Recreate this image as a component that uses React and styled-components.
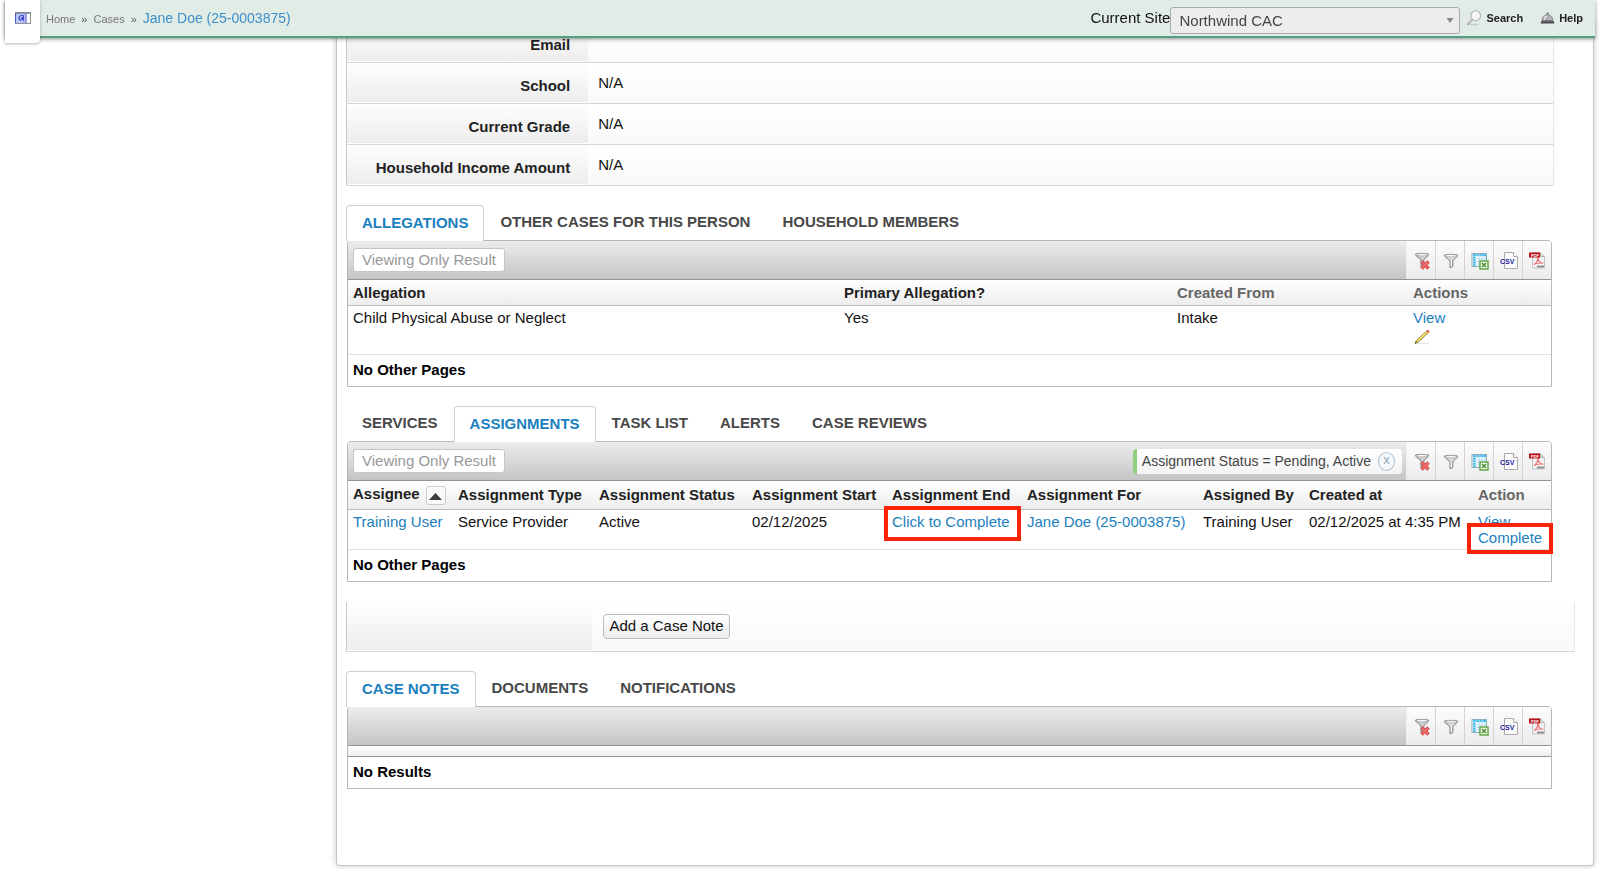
import React from "react";
import styled, { createGlobalStyle } from "styled-components";

const GlobalStyle = createGlobalStyle`
  * {
    box-sizing: border-box;
  }
  body {
    margin: 0;
    background: #fff;
    color: #111;
    font-family: "Liberation Sans", Arial, Helvetica, sans-serif;
    font-size: 15px;
    line-height: 16px;
  }
  button, select {
    font-family: inherit;
    font-size: inherit;
    line-height: inherit;
  }
`;

const Link = styled.a`
  color: #1c7fbd;
  text-decoration: none;
`;

/* ---------- top bar ---------- */

const TopBar = styled.header`
  position: fixed;
  top: 0;
  left: 5px;
  right: 5px;
  z-index: 2;
  display: flex;
  align-items: center;
  height: 38px;
  padding-right: 12px;
  background: #e2ece6;
  border-bottom: 2px solid #53a080;
  box-shadow: 0 1px 4px rgba(0, 0, 0, 0.45);
`;

const MenuToggle = styled.button`
  align-self: flex-start;
  flex: none;
  width: 35px;
  height: 43px;
  padding: 0 0 8px;
  border: none;
  border-radius: 0 0 4px 0;
  background: #fff;
  box-shadow: 0 1px 3px rgba(0, 0, 0, 0.3);
  cursor: pointer;

  svg {
    display: block;
    margin: 0 auto;
  }
`;

const Crumbs = styled.nav`
  display: flex;
  align-items: baseline;
  gap: 6px;
  flex: 1;
  padding-left: 6px;
  font-size: 11px;
  color: #555;
`;

const Crumb = styled(Link)`
  color: ${(props) => (props.$current ? "#3d8fc9" : "#777")};
  font-size: ${(props) => (props.$current ? "14px" : "11px")};
`;

const SiteLabel = styled.label`
  color: #111;
`;

const SelectBox = styled.div`
  position: relative;
  width: 290px;
  margin-top: 5px;

  svg {
    position: absolute;
    right: 6px;
    top: 11px;
    pointer-events: none;
  }
`;

const SiteSelect = styled.select`
  display: block;
  appearance: none;
  width: 100%;
  height: 27px;
  padding: 0 24px 0 8px;
  border: 1px solid #aaa;
  border-radius: 3px;
  background: #ededed;
  color: #444;
`;

const BarLink = styled.a`
  display: flex;
  align-items: center;
  gap: 4px;
  margin-left: ${(props) => props.$gap};
  color: #222;
  font-size: 11px;
  font-weight: bold;
  text-decoration: none;
`;

/* ---------- page panel ---------- */

const Panel = styled.main`
  margin: 22px 6px 3px 336px;
  padding: 0 0 76px 9px;
  border: 1px solid #c4c4c4;
  border-top: none;
  border-radius: 0 0 4px 4px;
  background: #fff;
  box-shadow: 0 0 6px rgba(0, 0, 0, 0.22);
`;

const Details = styled.dl`
  margin: 0 39px 19px 0;
`;

const FormRow = styled.div`
  display: flex;
  height: ${(props) => (props.$tall ? "50px" : "41px")};
  border-left: 1px solid #c8c8c8;
  border-right: 1px solid #e8e8e8;
  border-bottom: 1px solid #d6d6d6;
  background: linear-gradient(#fff, #f9f9f9);
`;

const FormLabel = styled.dt`
  width: 20%;
  padding: 14px 18px 0 0;
  border-top: 1px solid #fff;
  border-bottom: 1px solid #fff;
  background: linear-gradient(#fdfdfd, #ededed);
  color: #222;
  font-weight: bold;
  text-align: right;
`;

const FormValue = styled.dd`
  flex: 1;
  margin: 0;
  padding: 12px 0 0 10px;
`;

const NoteRow = styled(FormRow)`
  margin: 20px 18px 19px 0;
`;

const NoteLabel = styled.div`
  width: 20%;
  border-bottom: 1px solid #fff;
  background: linear-gradient(#fff, #ededed);
`;

const NoteButton = styled.button`
  align-self: flex-start;
  height: 25px;
  margin: 12px 0 0 11px;
  padding: 0 5px 1px;
  border: 1px solid #bbb;
  border-radius: 4px;
  background: linear-gradient(#fff, #ececec);
  color: #111;
  cursor: pointer;
`;

/* ---------- tabs ---------- */

const Tabs = styled.div`
  display: flex;
  height: 35px;
`;

const Tab = styled.button`
  height: ${(props) => (props.$active ? "36px" : "34px")};
  padding: 0 15px 2px;
  border: 1px solid ${(props) => (props.$active ? "#d0d0d0" : "transparent")};
  border-bottom: none;
  border-radius: 4px 4px 0 0;
  background: ${(props) => (props.$active ? "#fff" : "transparent")};
  color: ${(props) => (props.$active ? "#1a80c0" : "#484848")};
  font-weight: bold;
  text-transform: uppercase;
  white-space: nowrap;
  cursor: pointer;
  z-index: 1;
`;

/* ---------- data grid ---------- */

const Grid = styled.section`
  margin: 0 41px ${(props) => (props.$gap ? "19px" : "0")} 1px;
  border: 1px solid #b8b8b8;
  border-radius: 4px 4px 0 0;
  background: #fff;
`;

const Toolbar = styled.div`
  display: flex;
  align-items: center;
  height: 39px;
  padding-left: 5px;
  border-bottom: 1px solid #959595;
  border-radius: 3px 3px 0 0;
  background: linear-gradient(#ececec, #c5c5c5);
`;

const ResultButton = styled.button`
  height: 24px;
  padding: 0 8px 1px;
  border: 1px solid #c6c6c6;
  border-radius: 3px;
  background: #fff;
  color: #999;
`;

const FilterChip = styled.div`
  display: flex;
  align-items: center;
  gap: 7px;
  height: 25px;
  padding: 0 7px 0 5px;
  border-left: 4px solid #8fd07f;
  border-radius: 4px;
  background: linear-gradient(#fff, #f3f3f3);
  color: #444;
  font-size: 14px;
`;

const ChipClose = styled.button`
  width: 17px;
  height: 19px;
  padding: 0 0 2px;
  border: 1px solid #a9bfd2;
  border-radius: 50%;
  background: #f6f9fc;
  color: #8fa9c0;
  font-size: 13px;
  line-height: 14px;
  cursor: pointer;
`;

const Tools = styled.div`
  display: flex;
  align-self: stretch;
  margin-left: ${(props) => (props.$chip ? "4px" : "auto")};
`;

const Spacer = styled.div`
  flex: 1;
`;

const Tool = styled.button`
  width: 29px;
  padding: 1px 0 0 1px;
  border: none;
  border-left: 1px solid #d4d4d4;
  background: linear-gradient(#fcfcfc, #ececec);
  cursor: pointer;

  &:first-child {
    border-left-color: #eee;
  }
  &:last-child {
    border-top-right-radius: 3px;
  }
  svg {
    display: block;
    margin: 0 auto;
  }
`;

const Table = styled.table`
  width: 100%;
  border-collapse: separate;
  border-spacing: 0;
  table-layout: fixed;
`;

const Col = styled.col`
  width: ${(props) => props.$w}px;
`;

const Th = styled.th`
  height: ${(props) => (props.$tall ? "29px" : "26px")};
  padding: 0 0 0 5px;
  border-bottom: 1px solid #bdbdbd;
  background: linear-gradient(#fff, #ededed);
  color: ${(props) => (props.$plain ? "#666" : "#222")};
  text-align: left;
  white-space: nowrap;
`;

const Td = styled.td`
  height: ${(props) => (props.$tall ? "49px" : "40px")};
  padding: 4px 0 3px 5px;
  border-bottom: 1px solid #e2e2e2;
  vertical-align: top;
  white-space: nowrap;
`;

const SortHead = styled.div`
  display: flex;
  align-items: flex-start;
  gap: 6px;
`;

const SortButton = styled.button`
  width: 20px;
  height: 19px;
  padding: 0;
  border: 1px solid #ccc;
  border-radius: 3px;
  background: #fafafa;
  cursor: pointer;

  svg {
    display: block;
    margin: 2px auto 0;
  }
`;

const EmptyHead = styled.div`
  height: 11px;
  border-bottom: 1px solid #959595;
  background: linear-gradient(#fff, #ededed);
`;

const Pager = styled.div`
  height: 31px;
  padding: 7px 5px 0;
  color: #000;
  font-weight: bold;
`;

const ActionLink = styled(Link)`
  display: block;
  width: max-content;

  svg {
    display: block;
    margin: 3px 0 0 1px;
  }
`;

const Marked = styled(Link)`
  position: relative;
  display: block;
  width: max-content;

  &::after {
    content: "";
    position: absolute;
    top: ${(props) => (props.$tight ? "-7px" : "-8px")};
    bottom: ${(props) => (props.$tight ? "-8px" : "-11px")};
    left: ${(props) => (props.$tight ? "-11px" : "-8px")};
    right: ${(props) => (props.$tight ? "-11px" : "-11px")};
    border: 4px solid #fd2308;
  }
`;

/* ---------- icons ---------- */

const PanelIcon = () => (
  <svg width="16" height="12" viewBox="0 0 16 12">
    <rect x="0.5" y="0.5" width="15" height="11" fill="#fff" stroke="#8f9199" />
    <rect x="1" y="1" width="10" height="10" fill="#b9c6f5" />
    <path d="M0.5 1v10M11 1v10" stroke="#4a55cf" />
    <path d="M0 1.2h16" stroke="#777b8c" />
    <path d="M8.5 3.5H6.2Q4 4 4 6t2.4 2.4" fill="none" stroke="#3c48c8" strokeWidth="1.2" />
    <path d="M9 3.2v6L5.6 6.4z" fill="#3c48c8" />
  </svg>
);

const MagnifierIcon = () => (
  <svg width="15" height="16" viewBox="0 0 15 16">
    <ellipse cx="7" cy="14.6" rx="5" ry="0.8" fill="#c8d0cc" />
    <path d="M5.2 9.4L1 14" stroke="#a5a5a5" strokeWidth="2.4" strokeLinecap="round" />
    <path d="M5 9.4L1.2 13.6" stroke="#eee" />
    <circle cx="8.7" cy="5.7" r="4.9" fill="#f3f5f4" stroke="#b5b9b7" strokeWidth="1.3" />
    <path d="M6 5a3 3 0 0 1 3-2.4" fill="none" stroke="#fff" strokeWidth="1.2" />
  </svg>
);

const BellIcon = () => (
  <svg width="15" height="12" viewBox="0 0 15 12">
    <circle cx="7.5" cy="1.6" r="1.2" fill="#77757a" />
    <path d="M2 8.5C2.4 4.6 4.5 2.8 7.5 2.8s5.1 1.8 5.5 5.7z" fill="#b3b1b8" stroke="#77757c" strokeWidth="0.7" />
    <path d="M4.3 7.5c.3-2 1.2-3 2.4-3.5" fill="none" stroke="#f2f2f4" strokeWidth="1.3" />
    <path d="M0.5 11.5l1.3-3h11.4l1.3 3z" fill="#48464d" />
    <path d="M2 9h11" stroke="#8e8c94" strokeWidth="0.8" />
  </svg>
);

const CaretIcon = () => (
  <svg width="8" height="5" viewBox="0 0 8 5">
    <path d="M0.5 0h7L4 5z" fill="#888" />
  </svg>
);

const SortIcon = () => (
  <svg width="13" height="7" viewBox="0 0 13 7">
    <path d="M0 7L6.5 0 13 7z" fill="#3c3c3c" />
  </svg>
);

const funnel =
  "M1.2 2.5C1.2 1 14.8 1 14.8 2.5c0 1-5 4.5-5 5.5v5.5l-2.8 1.3V8c0-1-5.8-4.5-5.8-5.5z";

const FilterIcon = () => (
  <svg width="16" height="16" viewBox="0 0 16 16">
    <path d={funnel} fill="#d9d9d9" stroke="#7d7d7d" />
    <ellipse cx="8" cy="2.7" rx="5.6" ry="1.2" fill="#fafafa" stroke="#999" strokeWidth="0.6" />
    <path d="M8.3 7.5v6" stroke="#fff" />
  </svg>
);

const ClearFilterIcon = () => (
  <svg width="16" height="18" viewBox="0 0 16 18">
    <path d={funnel} fill="#cfcfcf" stroke="#7d7d7d" />
    <ellipse cx="8" cy="2.7" rx="5.6" ry="1.2" fill="#fafafa" stroke="#999" strokeWidth="0.6" />
    <path d="M7.5 9.5l7 7M14.5 9.5l-7 7" stroke="#c94444" strokeWidth="3.4" />
    <path d="M7.8 9.8l6.4 6.4M14.2 9.8l-6.4 6.4" stroke="#f06a6a" strokeWidth="2" />
  </svg>
);

const ExcelIcon = () => (
  <svg width="18" height="18" viewBox="0 0 18 18">
    <rect x="1" y="1.5" width="14.5" height="13" fill="#fff" stroke="#8faebc" />
    <path d="M2 2h13v2.4H2zM2 2h3v12H2z" fill="#4cbdec" />
    <path d="M5 7h10M5 9.5h10M5 12h10M8 4v10M11 4v10M14 4v10" stroke="#a8d8ee" strokeWidth="0.9" />
    <path d="M2 4.5h13M2 7h3M2 9.5h3M2 12h3M5 2v12M8 2v2M11 2v2" stroke="#fff" strokeWidth="0.5" />
    <rect x="9" y="9" width="8" height="8" fill="#f4fbef" stroke="#549b37" strokeWidth="1.3" />
    <path d="M11 11l4 4M15 11l-4 4" stroke="#4a9130" strokeWidth="1.5" />
  </svg>
);

const CsvIcon = () => (
  <svg width="18" height="18" viewBox="0 0 18 18">
    <path d="M4.5 0.5h9l4 4v12h-13z" fill="#fafafa" stroke="#aaa" />
    <path d="M13.5 0.5v4h4" fill="#fff" stroke="#aaa" />
    <text x="0" y="12" fontSize="7" fontWeight="bold" fill="#1c1ca8">
      CSV
    </text>
  </svg>
);

const PdfIcon = () => (
  <svg width="17" height="17" viewBox="0 0 17 17">
    <path d="M3.5 0.5h8l4 4v11.500h-12z" fill="#f2f2f2" stroke="#c4c4c4" />
    <path d="M11.5 0.5v4h4" fill="#ddd" stroke="#b3b3b3" />
    <path
      d="M5 12.5c2.500-1.500 4-4.500 3.800-7.500.2 3.500 2 6 5.500 6.200-3.500-.6-6.300-.2-9.300 1.300z"
      fill="none"
      stroke="#f07070"
      strokeWidth="1.1"
    />
    <path d="M8 14.5h7" stroke="#888" strokeWidth="1.8" />
    <rect x="0" y="0.5" width="11" height="5" fill="#bb1019" />
    <text x="2" y="4.5" fontSize="4" fontWeight="bold" fill="#fff">
      PDF
    </text>
  </svg>
);

const PencilIcon = () => (
  <svg width="17" height="16" viewBox="0 0 17 16">
    <path d="M3 14.6h12" stroke="#e2e2e2" strokeWidth="1.2" />
    <path d="M1 14.5l1.2-2.900L12.800 1.900l1.700 1.700L4 13.300z" fill="#ead244" stroke="#8c7a35" strokeWidth="0.8" />
    <path d="M12.200 2.300l1.400-1.500q1.500 0 2.100 1.800l-1.400 1.500z" fill="#e06a6a" />
    <path d="M1 14.5l.8-1.900 1.200 1.100z" fill="#333" />
    <path d="M3.8 11.5l8.500-7.800" stroke="#fff3a0" strokeWidth="0.8" />
  </svg>
);

/* ---------- page parts ---------- */

const tools = [
  { label: "Clear filters", Icon: ClearFilterIcon },
  { label: "Filter", Icon: FilterIcon },
  { label: "Export to Excel", Icon: ExcelIcon },
  { label: "Export to CSV", Icon: CsvIcon },
  { label: "Export to PDF", Icon: PdfIcon },
];

const details = [
  { label: "Email", value: "" },
  { label: "School", value: "N/A" },
  { label: "Current Grade", value: "N/A" },
  { label: "Household Income Amount", value: "N/A" },
];

function TabBar({ names, active }) {
  return (
    <Tabs role="tablist">
      {names.map((name) => (
        <Tab key={name} role="tab" aria-selected={name === active} $active={name === active}>
          {name}
        </Tab>
      ))}
    </Tabs>
  );
}

function GridToolbar({ result, filter }) {
  return (
    <Toolbar>
      {result && <ResultButton disabled>Viewing Only Result</ResultButton>}
      <Spacer />
      {filter && (
        <FilterChip>
          {filter}
          <ChipClose aria-label="Remove filter">x</ChipClose>
        </FilterChip>
      )}
      <Tools $chip={Boolean(filter)}>
        {tools.map(({ label, Icon }) => (
          <Tool key={label} aria-label={label}>
            <Icon />
          </Tool>
        ))}
      </Tools>
    </Toolbar>
  );
}

function App() {
  return (
    <>
      <GlobalStyle />
      <TopBar>
        <MenuToggle aria-label="Toggle menu">
          <PanelIcon />
        </MenuToggle>
        <Crumbs>
          <Crumb href="#">Home</Crumb>»<Crumb href="#">Cases</Crumb>»
          <Crumb href="#" $current>
            Jane Doe (25-0003875)
          </Crumb>
        </Crumbs>
        <SiteLabel htmlFor="site">Current Site</SiteLabel>
        <SelectBox>
          <SiteSelect id="site">
            <option>Northwind CAC</option>
          </SiteSelect>
          <CaretIcon />
        </SelectBox>
        <BarLink href="#" $gap="7px">
          <MagnifierIcon />
          Search
        </BarLink>
        <BarLink href="#" $gap="17px">
          <BellIcon />
          Help
        </BarLink>
      </TopBar>

      <Panel>
        <Details>
          {details.map((item) => (
            <FormRow key={item.label}>
              <FormLabel>{item.label}</FormLabel>
              <FormValue>{item.value}</FormValue>
            </FormRow>
          ))}
        </Details>

        <TabBar
          names={["Allegations", "Other Cases For This Person", "Household Members"]}
          active="Allegations"
        />
        <Grid $gap>
          <GridToolbar result />
          <Table>
            <colgroup>
              <Col $w={491} />
              <Col $w={333} />
              <Col $w={236} />
              <Col $w={143} />
            </colgroup>
            <thead>
              <tr>
                <Th>Allegation</Th>
                <Th>Primary Allegation?</Th>
                <Th $plain>Created From</Th>
                <Th $plain>Actions</Th>
              </tr>
            </thead>
            <tbody>
              <tr>
                <Td $tall>Child Physical Abuse or Neglect</Td>
                <Td $tall>Yes</Td>
                <Td $tall>Intake</Td>
                <Td $tall>
                  <ActionLink href="#">View</ActionLink>
                  <ActionLink href="#" aria-label="Edit">
                    <PencilIcon />
                  </ActionLink>
                </Td>
              </tr>
            </tbody>
          </Table>
          <Pager>No Other Pages</Pager>
        </Grid>

        <TabBar
          names={["Services", "Assignments", "Task List", "Alerts", "Case Reviews"]}
          active="Assignments"
        />
        <Grid>
          <GridToolbar result filter="Assignment Status = Pending, Active" />
          <Table>
            <colgroup>
              <Col $w={105} />
              <Col $w={141} />
              <Col $w={153} />
              <Col $w={140} />
              <Col $w={135} />
              <Col $w={176} />
              <Col $w={106} />
              <Col $w={169} />
              <Col $w={78} />
            </colgroup>
            <thead>
              <tr>
                <Th $tall>
                  <SortHead>
                    Assignee
                    <SortButton aria-label="Sort by assignee">
                      <SortIcon />
                    </SortButton>
                  </SortHead>
                </Th>
                <Th $tall>Assignment Type</Th>
                <Th $tall>Assignment Status</Th>
                <Th $tall>Assignment Start</Th>
                <Th $tall>Assignment End</Th>
                <Th $tall>Assignment For</Th>
                <Th $tall>Assigned By</Th>
                <Th $tall>Created at</Th>
                <Th $tall $plain>
                  Action
                </Th>
              </tr>
            </thead>
            <tbody>
              <tr>
                <Td>
                  <Link href="#">Training User</Link>
                </Td>
                <Td>Service Provider</Td>
                <Td>Active</Td>
                <Td>02/12/2025</Td>
                <Td>
                  <Marked href="#">Click to Complete</Marked>
                </Td>
                <Td>
                  <Link href="#">Jane Doe (25-0003875)</Link>
                </Td>
                <Td>Training User</Td>
                <Td>02/12/2025 at 4:35 PM</Td>
                <Td>
                  <ActionLink href="#">View</ActionLink>
                  <Marked href="#" $tight>
                    Complete
                  </Marked>
                </Td>
              </tr>
            </tbody>
          </Table>
          <Pager>No Other Pages</Pager>
        </Grid>

        <NoteRow $tall>
          <NoteLabel />
          <NoteButton>Add a Case Note</NoteButton>
        </NoteRow>

        <TabBar names={["Case Notes", "Documents", "Notifications"]} active="Case Notes" />
        <Grid>
          <GridToolbar />
          <EmptyHead />
          <Pager>No Results</Pager>
        </Grid>
      </Panel>
    </>
  );
}

export default App;
